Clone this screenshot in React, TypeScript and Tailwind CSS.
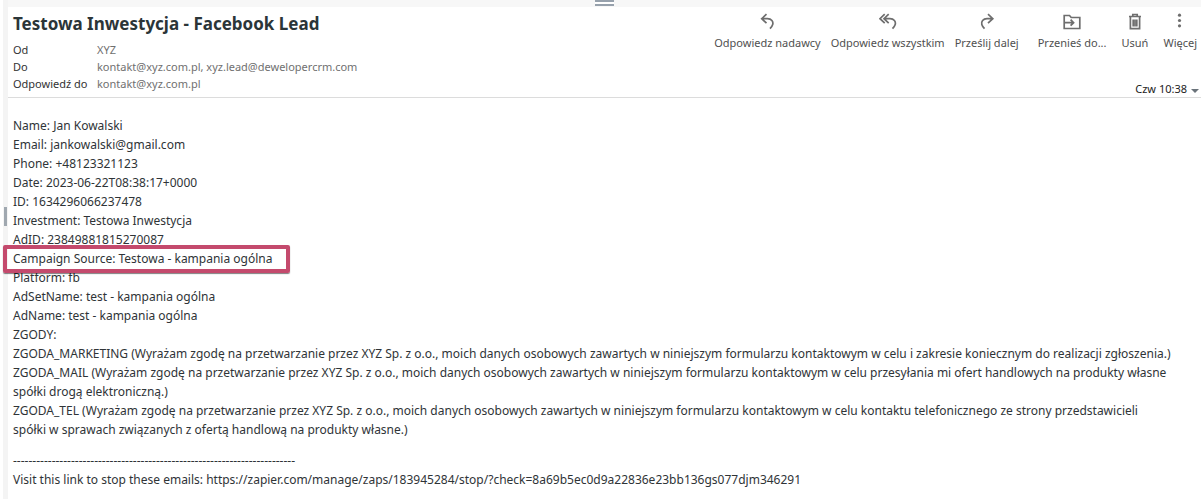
import type { ReactNode } from 'react';

function Icon({ children }: { children: ReactNode }) {
  return (
    <svg
      width="18"
      height="18"
      viewBox="0 0 18 18"
      fill="none"
      stroke="currentColor"
      strokeWidth="1.7"
      aria-hidden="true"
      className="shrink-0"
    >
      {children}
    </svg>
  );
}

function Action({ label, children }: { label: string; children: ReactNode }) {
  return (
    <button
      type="button"
      className="flex flex-col items-center gap-1 text-[11px] leading-4 whitespace-nowrap text-[#505050]"
    >
      <span className="text-[#6e6e6e]">{children}</span>
      {label}
    </button>
  );
}

const recipients = [
  { label: 'Od', value: 'XYZ' },
  { label: 'Do', value: 'kontakt@xyz.com.pl, xyz.lead@dewelopercrm.com' },
  { label: 'Odpowiedź do', value: 'kontakt@xyz.com.pl' },
];

const lines = [
  'Name: Jan Kowalski',
  'Email: jankowalski@gmail.com',
  'Phone: +48123321123',
  'Date: 2023-06-22T08:38:17+0000',
  'ID: 1634296066237478',
  'Investment: Testowa Inwestycja',
  'AdID: 23849881815270087',
  'Campaign Source: Testowa - kampania ogólna',
  'Platform: fb',
  'AdSetName: test - kampania ogólna',
  'AdName: test - kampania ogólna',
  'ZGODY:',
  'ZGODA_MARKETING (Wyrażam zgodę na przetwarzanie przez XYZ Sp. z o.o., moich danych osobowych zawartych w niniejszym formularzu kontaktowym w celu i zakresie koniecznym do realizacji zgłoszenia.)',
  'ZGODA_MAIL (Wyrażam zgodę na przetwarzanie przez XYZ Sp. z o.o., moich danych osobowych zawartych w niniejszym formularzu kontaktowym w celu przesyłania mi ofert handlowych na produkty własne spółki drogą elektroniczną.)',
  'ZGODA_TEL (Wyrażam zgodę na przetwarzanie przez XYZ Sp. z o.o., moich danych osobowych zawartych w niniejszym formularzu kontaktowym w celu kontaktu telefonicznego ze strony przedstawicieli spółki w sprawach związanych z ofertą handlową na produkty własne.)',
];

const stopUrl =
  'https://zapier.com/manage/zaps/183945284/stop/?check=8a69b5ec0d9a22836e23bb136gs077djm346291';

function Header() {
  return (
    <header className="flex justify-between border-b border-[#dcdcdc] pl-[5px]">
      <div className="pt-1 pb-[5px]">
        <h1 className="text-[17px] leading-[26px] font-bold text-[#2b3538]">Testowa Inwestycja - Facebook Lead</h1>
        <dl className="mt-1 text-[11px] leading-[17px]">
          {recipients.map((r) => (
            <div key={r.label} className="flex">
              <dt className="w-[84px] text-[#333333]">{r.label}</dt>
              <dd className="text-[#707070]">{r.value}</dd>
            </div>
          ))}
        </dl>
      </div>
      <div className="flex flex-col items-end justify-between pt-[6px]">
        <div className="flex gap-[15px] pr-1">
          <div className="flex gap-[10px] pr-1">
            <Action label="Odpowiedz nadawcy">
              <Icon>
                <path d="M8.5 1.2 3.7 5.7l4.8 4.5M4 5.7h5.5c4 0 6 3 5.2 5.8-.4 1.5-1.3 2.7-2.7 4.2" />
              </Icon>
            </Action>
            <Action label="Odpowiedz wszystkim">
              <Icon>
                <path d="M5.7 1.2 1 5.7l4.7 4.5M9.7 1.2 5 5.7l4.7 4.5M5.5 5.7H11c4 0 6 3 5.2 5.8-.4 1.5-1.3 2.7-2.7 4.2" />
              </Icon>
            </Action>
            <Action label="Prześlij dalej">
              <Icon>
                <path d="M10 1.2 14.8 5.7 10 10.2M14.5 5.7H9c-4 0-6 3-5.2 5.800.4 1.5 1.3 2.7 2.7 4.2" />
              </Icon>
            </Action>
          </div>
          <Action label="Przenieś do...">
            <Icon>
              <path d="M1.2 2.5h5.3l1.7 2h8.6v11H1.200zM1.2 9.7h9M7.6 6.7l3 3-3 3" />
            </Icon>
          </Action>
          <Action label="Usuń">
            <Icon>
              <path d="M3 3.5h12M6.8 3.2V1.5h4.4v1.7M4.4 4v11.7h9.200V4M7.2 6.5v7M9 6.5v7M10.8 6.5v7" />
            </Icon>
          </Action>
          <Action label="Więcej">
            <Icon>
              <g fill="currentColor" stroke="none">
                <circle cx="8.5" cy="2.2" r="1.6" />
                <circle cx="8.5" cy="7.5" r="1.6" />
                <circle cx="8.5" cy="12.8" r="1.6" />
              </g>
            </Icon>
          </Action>
        </div>
        <div className="flex items-center gap-1 pr-[2px] text-[11px] leading-4 text-[#222222]">
          <time>Czw 10:38</time>
          <button type="button" aria-label="Szczegóły" className="pt-1 text-[#6a737a]">
            <svg width="8" height="4" viewBox="0 0 8 4" fill="currentColor" aria-hidden="true">
              <path d="M0 0h8L4 4z" />
            </svg>
          </button>
        </div>
      </div>
    </header>
  );
}

export default function App() {
  return (
    <div className="flex min-h-screen bg-white pl-[3px] font-['Noto_Sans',sans-serif]">
      <div className="flex w-[5px] shrink-0 flex-col bg-[#f4f4f4] pt-[207px]">
        <div className="ml-px h-[19px] w-[3px] bg-[#a0a8b0]" />
      </div>
      <div className="min-w-0 flex-1">
        <div className="flex h-[7px] justify-center bg-[#f7f7f7]">
          <div className="h-[6px] w-[19px] border-y-2 border-[#97a1ac] bg-white" />
        </div>
        <Header />
        <main className="pt-[18px] pr-[29px] pl-[5px] text-xs leading-[19px] text-[#2f3437]">
          {lines.map((line) =>
            line.startsWith('Campaign') ? (
              <p key={line} className="relative w-fit">
                {line}
                <span className="absolute -top-1 -right-[18px] -bottom-[5px] -left-[10px] rounded-[2px] border-4 border-[#c44a6d] shadow-[0_1px_1px_#00000080]" />
              </p>
            ) : (
              <p key={line}>{line}</p>
            ),
          )}
          <div className="pt-3">
            <p>-------------------------------------------------------------------------</p>
            <p>
              Visit this link to stop these emails: <a href={stopUrl}>{stopUrl}</a>
            </p>
          </div>
        </main>
      </div>
    </div>
  );
}
